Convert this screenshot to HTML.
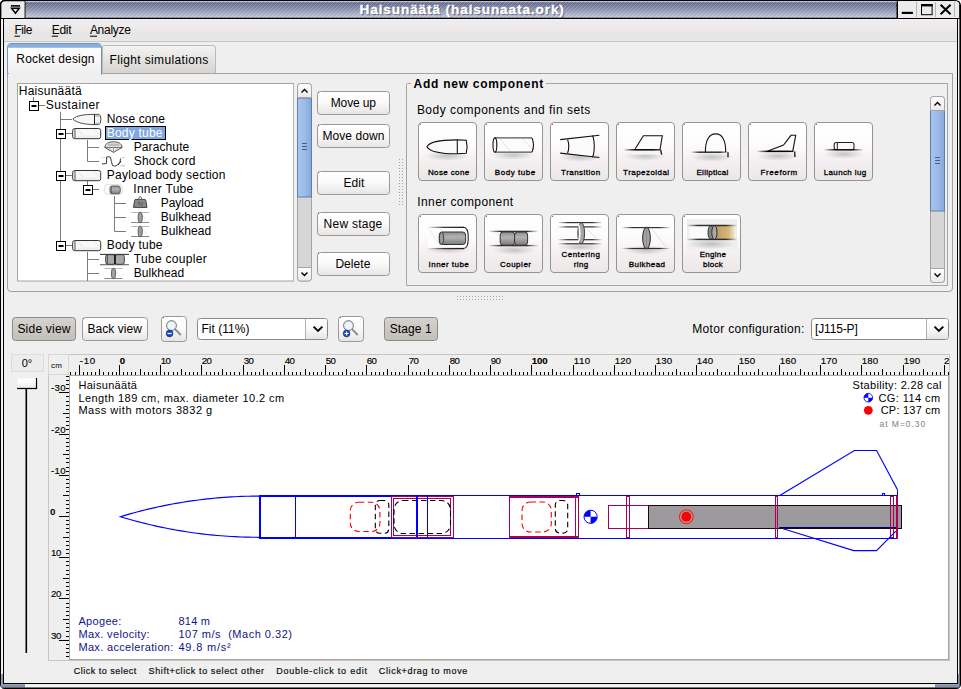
<!DOCTYPE html><html><head><meta charset="utf-8"><style>html,body{margin:0;padding:0;background:#efefef;overflow:hidden;width:961px;height:689px}svg{display:block}text{font-family:"Liberation Sans",sans-serif;white-space:pre}</style></head><body>
<svg width="961" height="689" viewBox="0 0 961 689" shape-rendering="auto">
<defs>
<linearGradient id="gTitle" x1="0" y1="0" x2="0" y2="1"><stop offset="0" stop-color="#5a6187"/><stop offset="0.5" stop-color="#8b91ad"/><stop offset="1" stop-color="#c3c6da"/></linearGradient>
<pattern id="pStripe" width="4" height="4" patternUnits="userSpaceOnUse"><path d="M-1,5 L5,-1" stroke="#ffffff" stroke-opacity="0.22" stroke-width="1"/><path d="M-1,1 L1,-1 M3,5 L5,3" stroke="#ffffff" stroke-opacity="0.22" stroke-width="1"/></pattern>
<linearGradient id="gMenu" x1="0" y1="0" x2="0" y2="1"><stop offset="0" stop-color="#f6f3f6"/><stop offset="0.06" stop-color="#efecef"/><stop offset="0.33" stop-color="#eeebee"/><stop offset="0.36" stop-color="#edeae6"/><stop offset="0.6" stop-color="#ebe6e6"/><stop offset="0.62" stop-color="#e6e6e6"/><stop offset="0.9" stop-color="#e6e6e6"/><stop offset="1" stop-color="#ebe8eb"/></linearGradient>
<linearGradient id="gBtn" x1="0" y1="0" x2="0" y2="1"><stop offset="0" stop-color="#ffffff"/><stop offset="0.45" stop-color="#fbfafa"/><stop offset="1" stop-color="#e8e4e4"/></linearGradient>
<linearGradient id="gBtnP" x1="0" y1="0" x2="0" y2="1"><stop offset="0" stop-color="#d6d2ce"/><stop offset="1" stop-color="#c2beba"/></linearGradient>
<linearGradient id="gComp" x1="0" y1="0" x2="0" y2="1"><stop offset="0" stop-color="#ffffff"/><stop offset="0.35" stop-color="#fdfcfd"/><stop offset="0.6" stop-color="#f6f2f4"/><stop offset="1" stop-color="#ebe7e6"/></linearGradient>
<linearGradient id="gTab" x1="0" y1="0" x2="0" y2="1"><stop offset="0" stop-color="#f4f4f4"/><stop offset="1" stop-color="#d6d3d0"/></linearGradient>
<linearGradient id="gTabSel" x1="0" y1="0" x2="0" y2="1"><stop offset="0" stop-color="#ffffff"/><stop offset="1" stop-color="#efefef"/></linearGradient>
<linearGradient id="gThumb" x1="0" y1="0" x2="1" y2="0"><stop offset="0" stop-color="#a9c5ec"/><stop offset="0.5" stop-color="#9dbbe6"/><stop offset="1" stop-color="#86a7da"/></linearGradient>
<linearGradient id="gArrowBtn" x1="0" y1="0" x2="0" y2="1"><stop offset="0" stop-color="#ffffff"/><stop offset="1" stop-color="#ebe8e8"/></linearGradient>
<linearGradient id="gShadow" x1="0" y1="0" x2="0" y2="1"><stop offset="0" stop-color="#000" stop-opacity="0.22"/><stop offset="1" stop-color="#000" stop-opacity="0"/></linearGradient>
<radialGradient id="gShadowR" cx="0.5" cy="0.5" r="0.5"><stop offset="0" stop-color="#000" stop-opacity="0.2"/><stop offset="1" stop-color="#000" stop-opacity="0"/></radialGradient>
<linearGradient id="gCyl" x1="0" y1="0" x2="0" y2="1"><stop offset="0" stop-color="#8c8c8c"/><stop offset="0.4" stop-color="#b4b4b4"/><stop offset="1" stop-color="#7a7a7a"/></linearGradient>
<linearGradient id="gTan" x1="0" y1="0" x2="1" y2="0"><stop offset="0" stop-color="#b89860"/><stop offset="0.7" stop-color="#d8b878"/><stop offset="1" stop-color="#f0e8d8"/></linearGradient>
<linearGradient id="gFade" x1="0" y1="0" x2="1" y2="0"><stop offset="0" stop-color="#000" stop-opacity="0.05"/><stop offset="0.22" stop-color="#000" stop-opacity="0.8"/><stop offset="0.78" stop-color="#000" stop-opacity="0.8"/><stop offset="1" stop-color="#000" stop-opacity="0.05"/></linearGradient>
<linearGradient id="gFadeL" x1="0" y1="0" x2="1" y2="0"><stop offset="0" stop-color="#000" stop-opacity="0"/><stop offset="0.45" stop-color="#000" stop-opacity="0.75"/><stop offset="1" stop-color="#000" stop-opacity="0.9"/></linearGradient>
</defs>
<rect x="0" y="0" width="961" height="689" fill="#efefef" stroke="none" stroke-width="1" rx="0" />
<rect x="0" y="0" width="961" height="19" fill="#000" stroke="none" stroke-width="1" rx="0" />
<rect x="25.5" y="1.2" width="871" height="16.5" fill="url(#gTitle)" stroke="none" stroke-width="1" rx="0" />
<rect x="25.5" y="1.2" width="871" height="16.5" fill="url(#pStripe)" stroke="none" stroke-width="1" rx="0" />
<line x1="25.5" y1="1.7" x2="897" y2="1.7" stroke="#d8dae8" stroke-width="1" />
<path d="M0,0 L5,0 Q0,0 0,5 Z" fill="#ffffff"/>
<path d="M0,19 L0,5 Q0,0 5,0 L25,0 L25,19 Z" fill="#000"/>
<path d="M1.2,18 L1.2,5.5 Q1.2,1.2 5.5,1.2 L24.6,1.2 L24.6,18 Z" fill="#ececec"/>
<rect x="10.9" y="5.1" width="9.1" height="1.6" fill="#000" stroke="none" stroke-width="1" rx="0" />
<path d="M11.6,8.2 L19.3,8.2 L15.45,13.2 Z" fill="none" stroke="#000" stroke-width="1.5" stroke-linejoin="miter"/>
<g>
<text x="360.50" y="15.00" font-size="13.6" font-weight="bold" fill="#303040" letter-spacing="0.888" opacity="0.55" stroke="#303040" stroke-width="0.3">Haisunäätä (haisunaata.ork)</text>
<text x="359.50" y="14.00" font-size="13.6" font-weight="bold" fill="#ffffff" letter-spacing="0.888" stroke="#ffffff" stroke-width="0.3">Haisunäätä (haisunaata.ork)</text>
</g>
<path d="M897,0 L955,0 Q961,0 961,6 L961,19 L897,19 Z" fill="#000"/>
<path d="M898,1.1 L955,1.1 Q959.4,1.1 959.4,5.5 L959.4,18 L898,18 Z" fill="#ececec"/>
<path d="M955,0 L961,0 L961,6 Q961,0 955,0 Z" fill="#ffffff"/>
<line x1="916.5" y1="2" x2="916.5" y2="17" stroke="#b8b4b0" stroke-width="1" />
<line x1="935.5" y1="2" x2="935.5" y2="17" stroke="#b8b4b0" stroke-width="1" />
<line x1="954.5" y1="2" x2="954.5" y2="17" stroke="#b8b4b0" stroke-width="1" />
<rect x="901.8" y="11.8" width="11.1" height="2.2" fill="#000" stroke="none" stroke-width="1" rx="0" />
<rect x="921.5" y="4.5" width="10.6" height="10.2" fill="none" stroke="#000" stroke-width="1" rx="0" />
<rect x="921" y="4" width="11.6" height="2.4" fill="#000" stroke="none" stroke-width="1" rx="0" />
<path d="M940.6,4.8 L950.6,14.2 M950.6,4.8 L940.6,14.2" stroke="#000" stroke-width="2"/>
<line x1="0" y1="18.5" x2="958" y2="18.5" stroke="#000" stroke-width="1.1" />
<rect x="0" y="5" width="1.2" height="684" fill="#000" stroke="none" stroke-width="1" rx="0" />
<rect x="1.2" y="19" width="1.8" height="665" fill="#f4f4f4" stroke="none" stroke-width="1" rx="0" />
<rect x="3" y="18" width="1" height="666" fill="#000" stroke="none" stroke-width="1" rx="0" />
<rect x="957" y="18" width="1" height="666" fill="#000" stroke="none" stroke-width="1" rx="0" />
<rect x="958" y="19" width="1.4" height="665" fill="#f4f4f4" stroke="none" stroke-width="1" rx="0" />
<rect x="959.4" y="5" width="1.6" height="684" fill="#000" stroke="none" stroke-width="1" rx="0" />
<rect x="3" y="683" width="955" height="1.2" fill="#000" stroke="none" stroke-width="1" rx="0" />
<rect x="1" y="684.2" width="958" height="3.3" fill="#f4f4f4" stroke="none" stroke-width="1" rx="0" />
<rect x="1" y="684.2" width="24" height="3.3" fill="#8890a8" stroke="none" stroke-width="1" rx="0" />
<rect x="935" y="684.2" width="24" height="3.3" fill="#8890a8" stroke="none" stroke-width="1" rx="0" />
<rect x="1.2" y="674" width="1.8" height="10.2" fill="#8890a8" stroke="none" stroke-width="1" rx="0" />
<rect x="958" y="674" width="1.4" height="10.2" fill="#8890a8" stroke="none" stroke-width="1" rx="0" />
<rect x="0" y="687.5" width="961" height="1.5" fill="#000" stroke="none" stroke-width="1" rx="0" />
<path d="M0,684 L0,689 L5,689 Q0,689 0,684 Z" fill="#ffffff"/>
<path d="M961,684 L961,689 L956,689 Q961,689 961,684 Z" fill="#ffffff"/>
<rect x="4" y="19" width="953" height="22" fill="url(#gMenu)" stroke="none" stroke-width="1" rx="0" />
<line x1="4" y1="41.5" x2="957" y2="41.5" stroke="#c9c5bd" stroke-width="1" />
<rect x="4" y="42" width="953" height="641" fill="#efefef" stroke="none" stroke-width="1" rx="0" />
<text x="14.50" y="33.50" font-size="12" font-weight="normal" fill="#000" letter-spacing="-0.507" >File</text>
<line x1="14.5" y1="36.2" x2="20" y2="36.2" stroke="#000" stroke-width="1" />
<text x="51.80" y="33.50" font-size="12" font-weight="normal" fill="#000" letter-spacing="-0.320" >Edit</text>
<line x1="51.8" y1="36.2" x2="58" y2="36.2" stroke="#000" stroke-width="1" />
<text x="89.90" y="33.50" font-size="12" font-weight="normal" fill="#000" letter-spacing="-0.287" >Analyze</text>
<line x1="89.9" y1="36.2" x2="97" y2="36.2" stroke="#000" stroke-width="1" />
<path d="M7.5,73.5 L952.5,73.5 L952.5,288 Q952.5,291.5 949,291.5 L11,291.5 Q7.5,291.5 7.5,288 Z" fill="#efefef" stroke="#a4a09c" stroke-width="1"/>
<path d="M102.5,73.5 L102.5,48 Q102.5,45.5 105,45.5 L213,45.5 Q215.5,45.5 215.5,48 L215.5,73.5 Z" fill="url(#gTab)" stroke="#bdb9b5" stroke-width="1"/>
<line x1="102" y1="73.5" x2="216" y2="73.5" stroke="#a8a4a0" stroke-width="1" />
<text x="109.50" y="64.30" font-size="12" font-weight="normal" fill="#000" letter-spacing="0.362" >Flight simulations</text>
<path d="M7.5,74.5 L7.5,47 Q7.5,43.5 11,43.5 L98,43.5 Q101.5,43.5 101.5,47 L101.5,74.5 Z" fill="url(#gTabSel)" stroke="#7592bb" stroke-width="1"/>
<path d="M8,47.5 L8,46.8 Q8,44 11,44 L98,44 Q101,44 101,46.8 L101,47.5 Z" fill="#8aaddf"/>
<line x1="8" y1="47.5" x2="101" y2="47.5" stroke="#a6c0e6" stroke-width="1" />
<rect x="8" y="72" width="93" height="3" fill="#efefef"/>
<text x="16.30" y="62.50" font-size="12" font-weight="normal" fill="#000" letter-spacing="0.177" >Rocket design</text>
<line x1="7.5" y1="73.5" x2="9" y2="73.5" stroke="#b0aca8" stroke-width="1" />
<rect x="17.5" y="83.5" width="276" height="197.5" fill="#ffffff" stroke="#a8a4a0" stroke-width="1" rx="0" />
<line x1="293.5" y1="84" x2="293.5" y2="281" stroke="#b8b4b0" stroke-width="1" />
<line x1="33.5" y1="97" x2="33.5" y2="101" stroke="#7a7a7a" stroke-width="1" />
<line x1="60.5" y1="112" x2="60.5" y2="242" stroke="#7a7a7a" stroke-width="1" />
<line x1="87.5" y1="140" x2="87.5" y2="161.5" stroke="#7a7a7a" stroke-width="1" />
<line x1="87.5" y1="181" x2="87.5" y2="185" stroke="#7a7a7a" stroke-width="1" />
<line x1="114.5" y1="196" x2="114.5" y2="231.5" stroke="#7a7a7a" stroke-width="1" />
<line x1="87.5" y1="252" x2="87.5" y2="281" stroke="#7a7a7a" stroke-width="1" />
<text x="18.75" y="95.30" font-size="12" font-weight="normal" fill="#000" letter-spacing="0.253" >Haisunäätä</text>
<rect x="29.5" y="101.5" width="9" height="9" fill="#ffffff" stroke="#000" stroke-width="1" rx="0" />
<rect x="31.5" y="105" width="5" height="2" fill="#000" stroke="none" stroke-width="1" rx="0" />
<line x1="39" y1="105.5" x2="45" y2="105.5" stroke="#7a7a7a" stroke-width="1" />
<text x="45.75" y="109.30" font-size="12" font-weight="normal" fill="#000" letter-spacing="0.389" >Sustainer</text>
<line x1="60.5" y1="119.5" x2="72" y2="119.5" stroke="#7a7a7a" stroke-width="1" />
<path d="M72.9,119.1 C75.9,115.5 84.9,114.3 94.0,114.4 L98.9,114.4 Q100.9,114.4 100.9,119 Q100.9,124.6 98.9,124.6 L94.0,124.6 C84.9,124.6 75.9,122.5 72.9,119.1 Z" fill="#f6f6f6" stroke="#3a3a3a" stroke-width="0.9"/>
<line x1="94.5" y1="114.4" x2="94.5" y2="124.6" stroke="#222" stroke-width="1" />
<rect x="95.4" y="115" width="4.5" height="2" fill="#c8c8c8" stroke="none" stroke-width="1" rx="0" />
<rect x="95.4" y="122.5" width="4.5" height="1.6" fill="#c0c0c0" stroke="none" stroke-width="1" rx="0" />
<text x="106.75" y="123.30" font-size="12" font-weight="normal" fill="#000" letter-spacing="0.111" >Nose cone</text>
<rect x="56.5" y="129.5" width="9" height="9" fill="#ffffff" stroke="#000" stroke-width="1" rx="0" />
<rect x="58.5" y="133" width="5" height="2" fill="#000" stroke="none" stroke-width="1" rx="0" />
<line x1="66" y1="133.5" x2="72" y2="133.5" stroke="#7a7a7a" stroke-width="1" />
<rect x="72.7" y="128.5" width="28" height="10.2" fill="#f8f8f8" stroke="#333" stroke-width="1" rx="2" />
<line x1="75.0" y1="129" x2="75.0" y2="138.2" stroke="#444" stroke-width="0.9" />
<line x1="78.2" y1="129.5" x2="84.2" y2="137" stroke="#dcdcdc" stroke-width="0.8" />
<line x1="94.2" y1="129.5" x2="99.2" y2="134.5" stroke="#dcdcdc" stroke-width="0.8" />
<rect x="76.2" y="135.5" width="23" height="2.5" fill="#eeeeee" stroke="none" stroke-width="1" rx="0" />
<rect x="105.5" y="126.5" width="60" height="13" fill="#7ea6e0" stroke="#000" stroke-width="1" rx="0" />
<text x="106.75" y="137.30" font-size="12" font-weight="normal" fill="#ffffff" letter-spacing="0.219" >Body tube</text>
<line x1="87.5" y1="147.5" x2="99" y2="147.5" stroke="#7a7a7a" stroke-width="1" />
<path d="M104.8,147.4 Q105.5,141.8 113.5,141.8 Q121.5,141.8 122.2,147.4 L113.5,152.4 Z" fill="#f0f0f0" stroke="#444" stroke-width="0.9"/>
<rect x="107.5" y="143.5" width="12" height="2.5" fill="#bdbdbd" stroke="none" stroke-width="1" rx="0" />
<line x1="104.8" y1="147.4" x2="122.2" y2="147.4" stroke="#555" stroke-width="0.9" />
<line x1="113.5" y1="147.4" x2="113.5" y2="152" stroke="#888" stroke-width="0.7" />
<line x1="108.5" y1="147.4" x2="112.5" y2="152" stroke="#999" stroke-width="0.6" />
<line x1="118.5" y1="147.4" x2="114.5" y2="152" stroke="#999" stroke-width="0.6" />
<text x="133.75" y="151.30" font-size="12" font-weight="normal" fill="#000" letter-spacing="0.098" >Parachute</text>
<line x1="87.5" y1="161.5" x2="99" y2="161.5" stroke="#7a7a7a" stroke-width="1" />
<path d="M102.0,164 L106.5,163.5 L106.7,157 Q108.0,156.4 110.4,157.2 Q111.5,162 112.5,165.5 Q114.5,167 117.5,165 L120.0,162.5 L120.5,158.5" fill="none" stroke="#3a3a3a" stroke-width="1"/>
<line x1="118.0" y1="165" x2="121.0" y2="161" stroke="#222" stroke-width="1" />
<line x1="120.5" y1="158" x2="125.0" y2="157.4" stroke="#c8c8c8" stroke-width="0.9" />
<line x1="120.5" y1="166" x2="125.0" y2="165.6" stroke="#aaaaaa" stroke-width="0.9" />
<line x1="101.0" y1="157.6" x2="106.0" y2="157.4" stroke="#dddddd" stroke-width="0.9" />
<text x="133.75" y="165.30" font-size="12" font-weight="normal" fill="#000" letter-spacing="0.194" >Shock cord</text>
<rect x="56.5" y="171.5" width="9" height="9" fill="#ffffff" stroke="#000" stroke-width="1" rx="0" />
<rect x="58.5" y="175" width="5" height="2" fill="#000" stroke="none" stroke-width="1" rx="0" />
<line x1="66" y1="175.5" x2="72" y2="175.5" stroke="#7a7a7a" stroke-width="1" />
<rect x="72.7" y="170.5" width="28" height="10.2" fill="#f8f8f8" stroke="#333" stroke-width="1" rx="2" />
<line x1="75.0" y1="171" x2="75.0" y2="180.2" stroke="#444" stroke-width="0.9" />
<line x1="78.2" y1="171.5" x2="84.2" y2="179" stroke="#dcdcdc" stroke-width="0.8" />
<line x1="94.2" y1="171.5" x2="99.2" y2="176.5" stroke="#dcdcdc" stroke-width="0.8" />
<rect x="76.2" y="177.5" width="23" height="2.5" fill="#eeeeee" stroke="none" stroke-width="1" rx="0" />
<text x="106.75" y="179.30" font-size="12" font-weight="normal" fill="#000" letter-spacing="0.244" >Payload body section</text>
<rect x="83.5" y="185.5" width="9" height="9" fill="#ffffff" stroke="#000" stroke-width="1" rx="0" />
<rect x="85.5" y="189" width="5" height="2" fill="#000" stroke="none" stroke-width="1" rx="0" />
<line x1="93" y1="189.5" x2="99" y2="189.5" stroke="#7a7a7a" stroke-width="1" />
<ellipse cx="113.5" cy="189.5" rx="11" ry="6" fill="url(#gShadowR)"/>
<rect x="104.5" y="184.5" width="18" height="10" fill="#fafafa" stroke="#dcdcdc" stroke-width="0.8" rx="3" />
<rect x="110.0" y="186" width="10.2" height="7.8" fill="url(#gCyl)" stroke="#555" stroke-width="0.9" rx="2" />
<line x1="111.5" y1="186.5" x2="111.5" y2="193.5" stroke="#555" stroke-width="0.7" />
<text x="133.25" y="193.30" font-size="12" font-weight="normal" fill="#000" letter-spacing="0.293" >Inner Tube</text>
<line x1="114.5" y1="203.5" x2="126" y2="203.5" stroke="#7a7a7a" stroke-width="1" />
<path d="M134.7,200.4 Q134.7,199.4 135.7,199.4 L144.79999999999998,199.4 Q145.7,199.4 145.79999999999998,200.4 L147.0,207.4 L133.39999999999998,207.4 Z" fill="#8a8a8a" stroke="#333" stroke-width="0.9"/>
<circle cx="140.2" cy="198.2" r="1.4" fill="#fff" stroke="#444" stroke-width="0.8"/>
<text x="137.7" y="205.2" font-size="5" fill="#555">kg</text>
<text x="160.75" y="207.30" font-size="12" font-weight="normal" fill="#000" letter-spacing="-0.053" >Payload</text>
<line x1="114.5" y1="217.5" x2="126" y2="217.5" stroke="#7a7a7a" stroke-width="1" />
<line x1="131.2" y1="212.5" x2="149.2" y2="212.5" stroke="#b8b8b8" stroke-width="1" />
<line x1="131.2" y1="222.5" x2="149.2" y2="222.5" stroke="#888888" stroke-width="1" />
<line x1="141.2" y1="213.5" x2="147.2" y2="221" stroke="#e0e0e0" stroke-width="0.7" />
<ellipse cx="140.2" cy="217.5" rx="2.1" ry="5.2" fill="#a0a0a0" stroke="#444" stroke-width="0.8"/>
<text x="160.75" y="221.30" font-size="12" font-weight="normal" fill="#000" letter-spacing="0.066" >Bulkhead</text>
<line x1="114.5" y1="231.5" x2="126" y2="231.5" stroke="#7a7a7a" stroke-width="1" />
<line x1="131.2" y1="226.5" x2="149.2" y2="226.5" stroke="#b8b8b8" stroke-width="1" />
<line x1="131.2" y1="236.5" x2="149.2" y2="236.5" stroke="#888888" stroke-width="1" />
<line x1="141.2" y1="227.5" x2="147.2" y2="235" stroke="#e0e0e0" stroke-width="0.7" />
<ellipse cx="140.2" cy="231.5" rx="2.1" ry="5.2" fill="#a0a0a0" stroke="#444" stroke-width="0.8"/>
<text x="160.75" y="235.30" font-size="12" font-weight="normal" fill="#000" letter-spacing="0.066" >Bulkhead</text>
<rect x="56.5" y="241.5" width="9" height="9" fill="#ffffff" stroke="#000" stroke-width="1" rx="0" />
<rect x="58.5" y="245" width="5" height="2" fill="#000" stroke="none" stroke-width="1" rx="0" />
<line x1="66" y1="245.5" x2="72" y2="245.5" stroke="#7a7a7a" stroke-width="1" />
<rect x="72.7" y="240.5" width="28" height="10.2" fill="#f8f8f8" stroke="#333" stroke-width="1" rx="2" />
<line x1="75.0" y1="241" x2="75.0" y2="250.2" stroke="#444" stroke-width="0.9" />
<line x1="78.2" y1="241.5" x2="84.2" y2="249" stroke="#dcdcdc" stroke-width="0.8" />
<line x1="94.2" y1="241.5" x2="99.2" y2="246.5" stroke="#dcdcdc" stroke-width="0.8" />
<rect x="76.2" y="247.5" width="23" height="2.5" fill="#eeeeee" stroke="none" stroke-width="1" rx="0" />
<text x="106.75" y="249.30" font-size="12" font-weight="normal" fill="#000" letter-spacing="0.219" >Body tube</text>
<line x1="87.5" y1="259.5" x2="99" y2="259.5" stroke="#7a7a7a" stroke-width="1" />
<line x1="100.0" y1="254.4" x2="129.0" y2="254.4" stroke="#3a3a3a" stroke-width="1.1" />
<line x1="100.0" y1="264.7" x2="129.0" y2="264.7" stroke="#666" stroke-width="1.1" />
<rect x="105.7" y="254.7" width="9.3" height="9.6" fill="#a8a8a8" stroke="#333" stroke-width="0.9" rx="2" />
<rect x="115.0" y="254.7" width="9.3" height="9.6" fill="#a8a8a8" stroke="#333" stroke-width="0.9" rx="2" />
<line x1="107.5" y1="255" x2="107.5" y2="264" stroke="#333" stroke-width="0.7" />
<line x1="115.0" y1="255" x2="115.0" y2="264" stroke="#000" stroke-width="1.3" />
<text x="133.75" y="263.30" font-size="12" font-weight="normal" fill="#000" letter-spacing="0.309" >Tube coupler</text>
<line x1="87.5" y1="273.5" x2="99" y2="273.5" stroke="#7a7a7a" stroke-width="1" />
<line x1="104.5" y1="268.5" x2="122.5" y2="268.5" stroke="#b8b8b8" stroke-width="1" />
<line x1="104.5" y1="278.5" x2="122.5" y2="278.5" stroke="#888888" stroke-width="1" />
<line x1="114.5" y1="269.5" x2="120.5" y2="277" stroke="#e0e0e0" stroke-width="0.7" />
<ellipse cx="113.5" cy="273.5" rx="2.1" ry="5.2" fill="#a0a0a0" stroke="#444" stroke-width="0.8"/>
<text x="133.75" y="277.30" font-size="12" font-weight="normal" fill="#000" letter-spacing="0.066" >Bulkhead</text>
<rect x="297.5" y="83.5" width="14" height="197.5" fill="#d6d6d6" stroke="#a8a4a0" stroke-width="1" rx="3" />
<rect x="297.5" y="98" width="14" height="99" fill="url(#gThumb)" stroke="#5d7fb0" stroke-width="1" rx="0" />
<path d="M302,143.5 h5 M302,146.5 h5 M302,149.5 h5" stroke="#46608e" stroke-width="1"/>
<path d="M297.5,97.5 L297.5,86.5 Q297.5,83.5 300.5,83.5 L308.5,83.5 Q311.5,83.5 311.5,86.5 L311.5,97.5 Z" fill="url(#gArrowBtn)" stroke="#a8a4a0"/>
<path d="M301.5,92.5 L304.5,89.5 L307.5,92.5" fill="none" stroke="#000" stroke-width="1.4"/>
<path d="M297.5,267.5 L297.5,278 Q297.5,281 300.5,281 L308.5,281 Q311.5,281 311.5,278 L311.5,267.5 Z" fill="url(#gArrowBtn)" stroke="#a8a4a0"/>
<path d="M301.5,272.5 L304.5,275.5 L307.5,272.5" fill="none" stroke="#000" stroke-width="1.4"/>
<rect x="317.5" y="91.5" width="72" height="23" fill="url(#gBtn)" stroke="#9e9894" stroke-width="1" rx="3" />
<rect x="318" y="92" width="1" height="1" fill="#ff00ff" stroke="none" stroke-width="1" rx="0" />
<text x="330.70" y="107.00" font-size="12" font-weight="normal" fill="#000" letter-spacing="-0.113" >Move up</text>
<rect x="317.5" y="124.5" width="72" height="23" fill="url(#gBtn)" stroke="#9e9894" stroke-width="1" rx="3" />
<rect x="318" y="125" width="1" height="1" fill="#ff00ff" stroke="none" stroke-width="1" rx="0" />
<text x="322.40" y="139.80" font-size="12" font-weight="normal" fill="#000" letter-spacing="0.085" >Move down</text>
<rect x="317.5" y="171.5" width="72" height="23" fill="url(#gBtn)" stroke="#9e9894" stroke-width="1" rx="3" />
<rect x="318" y="172" width="1" height="1" fill="#ff00ff" stroke="none" stroke-width="1" rx="0" />
<text x="343.50" y="187.00" font-size="12" font-weight="normal" fill="#000" letter-spacing="0.013" >Edit</text>
<rect x="317.5" y="212.5" width="72" height="23" fill="url(#gBtn)" stroke="#9e9894" stroke-width="1" rx="3" />
<rect x="318" y="213" width="1" height="1" fill="#ff00ff" stroke="none" stroke-width="1" rx="0" />
<text x="323.60" y="228.20" font-size="12" font-weight="normal" fill="#000" letter-spacing="0.245" >New stage</text>
<rect x="317.5" y="252.5" width="72" height="23" fill="url(#gBtn)" stroke="#9e9894" stroke-width="1" rx="3" />
<rect x="318" y="253" width="1" height="1" fill="#ff00ff" stroke="none" stroke-width="1" rx="0" />
<text x="335.40" y="267.90" font-size="12" font-weight="normal" fill="#000" letter-spacing="0.064" >Delete</text>
<rect x="399" y="159" width="1" height="1" fill="#a8a4a0" stroke="none" stroke-width="1" rx="0" />
<rect x="402" y="159" width="1" height="1" fill="#a8a4a0" stroke="none" stroke-width="1" rx="0" />
<rect x="399" y="162" width="1" height="1" fill="#a8a4a0" stroke="none" stroke-width="1" rx="0" />
<rect x="402" y="162" width="1" height="1" fill="#a8a4a0" stroke="none" stroke-width="1" rx="0" />
<rect x="399" y="165" width="1" height="1" fill="#a8a4a0" stroke="none" stroke-width="1" rx="0" />
<rect x="402" y="165" width="1" height="1" fill="#a8a4a0" stroke="none" stroke-width="1" rx="0" />
<rect x="399" y="168" width="1" height="1" fill="#a8a4a0" stroke="none" stroke-width="1" rx="0" />
<rect x="402" y="168" width="1" height="1" fill="#a8a4a0" stroke="none" stroke-width="1" rx="0" />
<rect x="399" y="171" width="1" height="1" fill="#a8a4a0" stroke="none" stroke-width="1" rx="0" />
<rect x="402" y="171" width="1" height="1" fill="#a8a4a0" stroke="none" stroke-width="1" rx="0" />
<rect x="399" y="174" width="1" height="1" fill="#a8a4a0" stroke="none" stroke-width="1" rx="0" />
<rect x="402" y="174" width="1" height="1" fill="#a8a4a0" stroke="none" stroke-width="1" rx="0" />
<rect x="399" y="177" width="1" height="1" fill="#a8a4a0" stroke="none" stroke-width="1" rx="0" />
<rect x="402" y="177" width="1" height="1" fill="#a8a4a0" stroke="none" stroke-width="1" rx="0" />
<rect x="399" y="180" width="1" height="1" fill="#a8a4a0" stroke="none" stroke-width="1" rx="0" />
<rect x="402" y="180" width="1" height="1" fill="#a8a4a0" stroke="none" stroke-width="1" rx="0" />
<rect x="399" y="183" width="1" height="1" fill="#a8a4a0" stroke="none" stroke-width="1" rx="0" />
<rect x="402" y="183" width="1" height="1" fill="#a8a4a0" stroke="none" stroke-width="1" rx="0" />
<rect x="399" y="186" width="1" height="1" fill="#a8a4a0" stroke="none" stroke-width="1" rx="0" />
<rect x="402" y="186" width="1" height="1" fill="#a8a4a0" stroke="none" stroke-width="1" rx="0" />
<rect x="399" y="189" width="1" height="1" fill="#a8a4a0" stroke="none" stroke-width="1" rx="0" />
<rect x="402" y="189" width="1" height="1" fill="#a8a4a0" stroke="none" stroke-width="1" rx="0" />
<rect x="399" y="192" width="1" height="1" fill="#a8a4a0" stroke="none" stroke-width="1" rx="0" />
<rect x="402" y="192" width="1" height="1" fill="#a8a4a0" stroke="none" stroke-width="1" rx="0" />
<rect x="399" y="195" width="1" height="1" fill="#a8a4a0" stroke="none" stroke-width="1" rx="0" />
<rect x="402" y="195" width="1" height="1" fill="#a8a4a0" stroke="none" stroke-width="1" rx="0" />
<rect x="399" y="198" width="1" height="1" fill="#a8a4a0" stroke="none" stroke-width="1" rx="0" />
<rect x="402" y="198" width="1" height="1" fill="#a8a4a0" stroke="none" stroke-width="1" rx="0" />
<rect x="399" y="201" width="1" height="1" fill="#a8a4a0" stroke="none" stroke-width="1" rx="0" />
<rect x="402" y="201" width="1" height="1" fill="#a8a4a0" stroke="none" stroke-width="1" rx="0" />
<rect x="399" y="204" width="1" height="1" fill="#a8a4a0" stroke="none" stroke-width="1" rx="0" />
<rect x="402" y="204" width="1" height="1" fill="#a8a4a0" stroke="none" stroke-width="1" rx="0" />
<path d="M411,83.5 L407.5,83.5 Q406.5,83.5 406.5,84.5 L406.5,285.5 L947.5,285.5 L947.5,83.5 L546,83.5" fill="none" stroke="#a8a4a0" stroke-width="1"/>
<text x="413.60" y="88.00" font-size="12" font-weight="bold" fill="#000" letter-spacing="0.728" >Add new component</text>
<text x="416.90" y="114.00" font-size="12" font-weight="normal" fill="#000" letter-spacing="0.470" >Body components and fin sets</text>
<text x="417.20" y="206.20" font-size="12" font-weight="normal" fill="#000" letter-spacing="0.420" >Inner component</text>
<rect x="418.5" y="122.5" width="58" height="58" fill="url(#gComp)" stroke="#9a9490" stroke-width="1" rx="3.5" />
<rect x="420" y="124" width="1" height="1" fill="#ff00ff" stroke="none" stroke-width="1" rx="0" />
<text x="427.90" y="175.20" font-size="8" font-weight="normal" fill="#000" letter-spacing="0.383" stroke="#000" stroke-width="0.3">Nose cone</text>
<rect x="484.5" y="122.5" width="58" height="58" fill="url(#gComp)" stroke="#9a9490" stroke-width="1" rx="3.5" />
<rect x="486" y="124" width="1" height="1" fill="#ff00ff" stroke="none" stroke-width="1" rx="0" />
<text x="494.80" y="175.20" font-size="8" font-weight="normal" fill="#000" letter-spacing="0.538" stroke="#000" stroke-width="0.3">Body tube</text>
<rect x="550.5" y="122.5" width="58" height="58" fill="url(#gComp)" stroke="#9a9490" stroke-width="1" rx="3.5" />
<rect x="552" y="124" width="1" height="1" fill="#ff00ff" stroke="none" stroke-width="1" rx="0" />
<text x="561.10" y="175.20" font-size="8" font-weight="normal" fill="#000" letter-spacing="0.467" stroke="#000" stroke-width="0.3">Transition</text>
<rect x="616.5" y="122.5" width="58" height="58" fill="url(#gComp)" stroke="#9a9490" stroke-width="1" rx="3.5" />
<rect x="618" y="124" width="1" height="1" fill="#ff00ff" stroke="none" stroke-width="1" rx="0" />
<text x="623.10" y="175.20" font-size="8" font-weight="normal" fill="#000" letter-spacing="0.448" stroke="#000" stroke-width="0.3">Trapezoidal</text>
<rect x="682.5" y="122.5" width="58" height="58" fill="url(#gComp)" stroke="#9a9490" stroke-width="1" rx="3.5" />
<rect x="684" y="124" width="1" height="1" fill="#ff00ff" stroke="none" stroke-width="1" rx="0" />
<text x="696.50" y="175.20" font-size="8" font-weight="normal" fill="#000" letter-spacing="0.271" stroke="#000" stroke-width="0.3">Elliptical</text>
<rect x="748.5" y="122.5" width="58" height="58" fill="url(#gComp)" stroke="#9a9490" stroke-width="1" rx="3.5" />
<rect x="750" y="124" width="1" height="1" fill="#ff00ff" stroke="none" stroke-width="1" rx="0" />
<text x="760.60" y="175.20" font-size="8" font-weight="normal" fill="#000" letter-spacing="0.589" stroke="#000" stroke-width="0.3">Freeform</text>
<rect x="814.5" y="122.5" width="58" height="58" fill="url(#gComp)" stroke="#9a9490" stroke-width="1" rx="3.5" />
<rect x="816" y="124" width="1" height="1" fill="#ff00ff" stroke="none" stroke-width="1" rx="0" />
<text x="823.70" y="175.20" font-size="8" font-weight="normal" fill="#000" letter-spacing="0.376" stroke="#000" stroke-width="0.3">Launch lug</text>
<ellipse cx="447" cy="156" rx="22" ry="5" fill="url(#gShadowR)" opacity="1.40"/>
<path d="M427,146.7 C429.5,141.8 440,139.8 457.3,139.9 L466.2,140.3 Q468,146.7 466.2,153.2 L457.3,153.8 C440,153.8 429.5,151.6 427,146.7 Z" fill="#fafafa" stroke="#111" stroke-width="1.1"/>
<line x1="457.3" y1="140" x2="457.3" y2="153.8" stroke="#111" stroke-width="1.1" />
<ellipse cx="513" cy="155" rx="22" ry="5" fill="url(#gShadowR)" opacity="1.40"/>
<rect x="494.5" y="137.8" width="38" height="14.4" fill="#fcfcfc" stroke="none" stroke-width="1" rx="0" />
<line x1="500" y1="138.8" x2="510" y2="151" stroke="#dadada" stroke-width="0.8" />
<line x1="523" y1="138.8" x2="532" y2="149" stroke="#dadada" stroke-width="0.8" />
<path d="M494.5,137.9 L532,137.9 M494.5,152.1 L532,152.1" stroke="#555" stroke-width="1.4"/>
<path d="M532,137.9 Q535,145 532,152.1" fill="none" stroke="#111" stroke-width="1.1"/>
<ellipse cx="494.9" cy="145" rx="1.9" ry="7.1" fill="#fafafa" stroke="#111" stroke-width="1.1"/>
<ellipse cx="580" cy="157" rx="22" ry="5" fill="url(#gShadowR)" opacity="1.40"/>
<path d="M567.6,139.6 L592.7,135.4 Q596,146.4 592.7,157.4 L567.6,153 Q570,146.3 567.6,139.6 Z" fill="#fbfbfb" stroke="none"/>
<path d="M560.2,139.6 L599.4,135.3 M560.2,153.1 L599.4,157.5" stroke="#111" stroke-width="1.1" fill="none"/>
<path d="M567.6,139.6 Q570,146.3 567.6,153 M592.7,135.4 Q596,146.4 592.7,157.4" stroke="#111" stroke-width="1.1" fill="none"/>
<ellipse cx="645" cy="156" rx="21" ry="5" fill="url(#gShadowR)" opacity="1.40"/>
<path d="M626.5,149.8 L660.3,149.8 L661.7,154.5 L632,154.5 Z" fill="#f4f4f4" stroke="none"/>
<path d="M634.6,149.8 L643.4,135.8 L662.3,135.8 L660,149.8 Z" fill="#fcfcfc" stroke="#111" stroke-width="1.1"/>
<rect x="624" y="149.05" width="37.50" height="1.5" fill="url(#gFade)"/>
<path d="M660.6,149.8 L661.7,154.6" stroke="#222" stroke-width="1.4" fill="none"/>
<ellipse cx="712" cy="157" rx="21" ry="5" fill="url(#gShadowR)" opacity="1.40"/>
<path d="M705.4,152.2 C705.2,140.5 709,133.9 715.7,133.9 C722.3,133.9 725.9,140.5 725.7,152.2" fill="#fcfcfc" stroke="#111" stroke-width="1.1"/>
<rect x="691" y="151.45" width="37.50" height="1.5" fill="url(#gFade)"/>
<path d="M728,152.2 L728,157.2" stroke="#222" stroke-width="1.4" fill="none"/>
<ellipse cx="778" cy="156" rx="21" ry="5" fill="url(#gShadowR)" opacity="1.40"/>
<path d="M766.6,151.4 L783.5,145 L791,135.3 L795.7,135.3 L792.7,151.4 Z" fill="#fcfcfc" stroke="#111" stroke-width="1.1"/>
<rect x="757" y="150.65" width="38.00" height="1.5" fill="url(#gFade)"/>
<path d="M794.7,151.4 L794.9,157" stroke="#222" stroke-width="1.4" fill="none"/>
<ellipse cx="844" cy="154" rx="20" ry="5" fill="url(#gShadowR)" opacity="1.40"/>
<rect x="834.2" y="142.5" width="19.8" height="7.2" fill="#fafafa" stroke="#222" stroke-width="1.1" rx="2" />
<line x1="837.3" y1="143" x2="837.3" y2="149.5" stroke="#222" stroke-width="1" />
<rect x="824" y="149.10" width="39.00" height="1.4" fill="url(#gFade)"/>
<rect x="418.5" y="214.5" width="58" height="58" fill="url(#gComp)" stroke="#9a9490" stroke-width="1" rx="3.5" />
<rect x="420" y="216" width="1" height="1" fill="#ff00ff" stroke="none" stroke-width="1" rx="0" />
<rect x="484.5" y="214.5" width="58" height="58" fill="url(#gComp)" stroke="#9a9490" stroke-width="1" rx="3.5" />
<rect x="486" y="216" width="1" height="1" fill="#ff00ff" stroke="none" stroke-width="1" rx="0" />
<rect x="550.5" y="214.5" width="58" height="58" fill="url(#gComp)" stroke="#9a9490" stroke-width="1" rx="3.5" />
<rect x="552" y="216" width="1" height="1" fill="#ff00ff" stroke="none" stroke-width="1" rx="0" />
<rect x="616.5" y="214.5" width="58" height="58" fill="url(#gComp)" stroke="#9a9490" stroke-width="1" rx="3.5" />
<rect x="618" y="216" width="1" height="1" fill="#ff00ff" stroke="none" stroke-width="1" rx="0" />
<rect x="682.5" y="214.5" width="58" height="58" fill="url(#gComp)" stroke="#9a9490" stroke-width="1" rx="3.5" />
<rect x="684" y="216" width="1" height="1" fill="#ff00ff" stroke="none" stroke-width="1" rx="0" />
<text x="428.60" y="267.00" font-size="8" font-weight="normal" fill="#000" letter-spacing="0.467" stroke="#000" stroke-width="0.3">Inner tube</text>
<text x="499.90" y="267.00" font-size="8" font-weight="normal" fill="#000" letter-spacing="0.517" stroke="#000" stroke-width="0.3">Coupler</text>
<text x="628.80" y="267.00" font-size="8" font-weight="normal" fill="#000" letter-spacing="0.406" stroke="#000" stroke-width="0.3">Bulkhead</text>
<text x="561.50" y="257.10" font-size="8" font-weight="normal" fill="#000" letter-spacing="0.473" stroke="#000" stroke-width="0.3">Centering</text>
<text x="573.70" y="267.30" font-size="8" font-weight="normal" fill="#000" letter-spacing="0.413" stroke="#000" stroke-width="0.3">ring</text>
<text x="699.70" y="256.80" font-size="8" font-weight="normal" fill="#000" letter-spacing="0.284" stroke="#000" stroke-width="0.3">Engine</text>
<text x="703.00" y="266.50" font-size="8" font-weight="normal" fill="#000" letter-spacing="0.295" stroke="#000" stroke-width="0.3">block</text>
<ellipse cx="448" cy="249" rx="22" ry="5" fill="url(#gShadowR)" opacity="1.40"/>
<path d="M428,227.3 L463.5,227.3 C467,227.3 468.3,232 468.3,237.9 C468.3,244 467,248.5 463.5,248.5 L428,248.5 Z" fill="#fdfdfd"/>
<rect x="427" y="226.7" width="37" height="1.3" fill="url(#gFadeL)"/>
<rect x="427" y="247.9" width="37" height="1.3" fill="url(#gFadeL)"/>
<path d="M463.5,227.3 C467,227.3 468.3,232 468.3,237.9 C468.3,244 467,248.5 463.5,248.5" fill="none" stroke="#222" stroke-width="1.1"/>
<line x1="430" y1="230" x2="440" y2="246" stroke="#e6e6e6" stroke-width="0.8" />
<rect x="439.3" y="232" width="26.3" height="12.5" fill="url(#gCyl)" stroke="#333" stroke-width="1" rx="3" />
<ellipse cx="441.5" cy="238.25" rx="2.2" ry="6.2" fill="#9a9a9a" stroke="#333" stroke-width="0.9"/>
<ellipse cx="514" cy="250" rx="22" ry="5" fill="url(#gShadowR)" opacity="1.40"/>
<rect x="489" y="230.70" width="49.00" height="1.4" fill="url(#gFade)"/>
<rect x="489" y="244.90" width="49.00" height="1.4" fill="url(#gFade)"/>
<rect x="500.2" y="232" width="14.6" height="13.2" fill="url(#gCyl)" stroke="#333" stroke-width="1" rx="3" />
<rect x="514.6" y="232" width="13" height="13.2" fill="url(#gCyl)" stroke="#333" stroke-width="1" rx="3" />
<ellipse cx="580" cy="247" rx="22" ry="4" fill="url(#gShadowR)" opacity="1.40"/>
<rect x="558" y="222.00" width="44.00" height="1.2" fill="url(#gFade)"/>
<rect x="558" y="226.30" width="44.00" height="1.2" fill="url(#gFade)"/>
<rect x="558" y="239.10" width="44.00" height="1.2" fill="url(#gFade)"/>
<rect x="558" y="243.20" width="44.00" height="1.2" fill="url(#gFade)"/>
<line x1="587" y1="229" x2="597" y2="239" stroke="#d8d8d8" stroke-width="0.8" />
<ellipse cx="581.2" cy="233.2" rx="3.4" ry="10.6" fill="#a4a4a4" stroke="#333" stroke-width="0.9"/>
<path d="M578.3,223.5 Q581.5,233.2 578.3,243" fill="none" stroke="#fafafa" stroke-width="1.6"/>
<ellipse cx="646" cy="250" rx="21" ry="5" fill="url(#gShadowR)" opacity="1.40"/>
<rect x="622" y="227.00" width="48.00" height="1.2" fill="url(#gFade)"/>
<rect x="622" y="247.90" width="48.00" height="1.2" fill="url(#gFade)"/>
<line x1="652" y1="229" x2="666" y2="247" stroke="#d8d8d8" stroke-width="0.8" />
<ellipse cx="646.5" cy="238" rx="3.8" ry="10.8" fill="#a4a4a4" stroke="#222" stroke-width="1"/>
<line x1="646.5" y1="227.5" x2="646.5" y2="248.5" stroke="#777" stroke-width="0.6" />
<rect x="687" y="219" width="50" height="30" fill="#efefef" stroke="none" stroke-width="1" rx="0" />
<ellipse cx="711" cy="244" rx="23" ry="5" fill="url(#gShadowR)" opacity="1.40"/>
<rect x="689.7" y="225.5" width="19" height="14" fill="#fbfbfb" stroke="none" stroke-width="1" rx="0" />
<rect x="714" y="225.8" width="20.8" height="13.4" fill="url(#gTan)" stroke="none" stroke-width="1" rx="0" />
<rect x="687" y="224.75" width="50.00" height="1.5" fill="url(#gFade)"/>
<rect x="687" y="238.65" width="50.00" height="1.5" fill="url(#gFade)"/>
<ellipse cx="710.8" cy="232.5" rx="2.8" ry="6.8" fill="#888" stroke="#222" stroke-width="0.9"/>
<ellipse cx="714.4" cy="232.5" rx="2.6" ry="6.8" fill="#aaa" stroke="#222" stroke-width="0.9"/>
<rect x="930.5" y="96.5" width="14" height="186" fill="#d6d6d6" stroke="#a8a4a0" stroke-width="1" rx="3" />
<rect x="930.5" y="110.5" width="14" height="100.5" fill="url(#gThumb)" stroke="#5d7fb0" stroke-width="1" rx="0" />
<path d="M935,157.5 h5 M935,160.5 h5 M935,163.5 h5" stroke="#46608e" stroke-width="1"/>
<path d="M930.5,110.5 L930.5,99.5 Q930.5,96.5 933.5,96.5 L941.5,96.5 Q944.5,96.5 944.5,99.5 L944.5,110.5 Z" fill="url(#gArrowBtn)" stroke="#a8a4a0"/>
<path d="M934.5,105.5 L937.5,102.5 L940.5,105.5" fill="none" stroke="#000" stroke-width="1.4"/>
<path d="M930.5,268.5 L930.5,279.5 Q930.5,282.5 933.5,282.5 L941.5,282.5 Q944.5,282.5 944.5,279.5 L944.5,268.5 Z" fill="url(#gArrowBtn)" stroke="#a8a4a0"/>
<path d="M934.5,273.5 L937.5,276.5 L940.5,273.5" fill="none" stroke="#000" stroke-width="1.4"/>
<rect x="457" y="296" width="1" height="1" fill="#a8a4a0" stroke="none" stroke-width="1" rx="0" />
<rect x="457" y="299" width="1" height="1" fill="#a8a4a0" stroke="none" stroke-width="1" rx="0" />
<rect x="460" y="296" width="1" height="1" fill="#a8a4a0" stroke="none" stroke-width="1" rx="0" />
<rect x="460" y="299" width="1" height="1" fill="#a8a4a0" stroke="none" stroke-width="1" rx="0" />
<rect x="463" y="296" width="1" height="1" fill="#a8a4a0" stroke="none" stroke-width="1" rx="0" />
<rect x="463" y="299" width="1" height="1" fill="#a8a4a0" stroke="none" stroke-width="1" rx="0" />
<rect x="466" y="296" width="1" height="1" fill="#a8a4a0" stroke="none" stroke-width="1" rx="0" />
<rect x="466" y="299" width="1" height="1" fill="#a8a4a0" stroke="none" stroke-width="1" rx="0" />
<rect x="469" y="296" width="1" height="1" fill="#a8a4a0" stroke="none" stroke-width="1" rx="0" />
<rect x="469" y="299" width="1" height="1" fill="#a8a4a0" stroke="none" stroke-width="1" rx="0" />
<rect x="472" y="296" width="1" height="1" fill="#a8a4a0" stroke="none" stroke-width="1" rx="0" />
<rect x="472" y="299" width="1" height="1" fill="#a8a4a0" stroke="none" stroke-width="1" rx="0" />
<rect x="475" y="296" width="1" height="1" fill="#a8a4a0" stroke="none" stroke-width="1" rx="0" />
<rect x="475" y="299" width="1" height="1" fill="#a8a4a0" stroke="none" stroke-width="1" rx="0" />
<rect x="478" y="296" width="1" height="1" fill="#a8a4a0" stroke="none" stroke-width="1" rx="0" />
<rect x="478" y="299" width="1" height="1" fill="#a8a4a0" stroke="none" stroke-width="1" rx="0" />
<rect x="481" y="296" width="1" height="1" fill="#a8a4a0" stroke="none" stroke-width="1" rx="0" />
<rect x="481" y="299" width="1" height="1" fill="#a8a4a0" stroke="none" stroke-width="1" rx="0" />
<rect x="484" y="296" width="1" height="1" fill="#a8a4a0" stroke="none" stroke-width="1" rx="0" />
<rect x="484" y="299" width="1" height="1" fill="#a8a4a0" stroke="none" stroke-width="1" rx="0" />
<rect x="487" y="296" width="1" height="1" fill="#a8a4a0" stroke="none" stroke-width="1" rx="0" />
<rect x="487" y="299" width="1" height="1" fill="#a8a4a0" stroke="none" stroke-width="1" rx="0" />
<rect x="490" y="296" width="1" height="1" fill="#a8a4a0" stroke="none" stroke-width="1" rx="0" />
<rect x="490" y="299" width="1" height="1" fill="#a8a4a0" stroke="none" stroke-width="1" rx="0" />
<rect x="493" y="296" width="1" height="1" fill="#a8a4a0" stroke="none" stroke-width="1" rx="0" />
<rect x="493" y="299" width="1" height="1" fill="#a8a4a0" stroke="none" stroke-width="1" rx="0" />
<rect x="496" y="296" width="1" height="1" fill="#a8a4a0" stroke="none" stroke-width="1" rx="0" />
<rect x="496" y="299" width="1" height="1" fill="#a8a4a0" stroke="none" stroke-width="1" rx="0" />
<rect x="499" y="296" width="1" height="1" fill="#a8a4a0" stroke="none" stroke-width="1" rx="0" />
<rect x="499" y="299" width="1" height="1" fill="#a8a4a0" stroke="none" stroke-width="1" rx="0" />
<rect x="502" y="296" width="1" height="1" fill="#a8a4a0" stroke="none" stroke-width="1" rx="0" />
<rect x="502" y="299" width="1" height="1" fill="#a8a4a0" stroke="none" stroke-width="1" rx="0" />
<rect x="12.5" y="317.5" width="63" height="23" fill="url(#gBtnP)" stroke="#8e8a86" stroke-width="1" rx="3" />
<text x="17.40" y="333.00" font-size="12" font-weight="normal" fill="#000" letter-spacing="0.215" >Side view</text>
<rect x="82.5" y="317.5" width="65" height="23" fill="url(#gBtn)" stroke="#9e9894" stroke-width="1" rx="3" />
<rect x="83" y="318" width="1" height="1" fill="#ff00ff" stroke="none" stroke-width="1" rx="0" />
<text x="87.40" y="333.20" font-size="12" font-weight="normal" fill="#000" letter-spacing="0.072" >Back view</text>
<rect x="161.5" y="316.5" width="25" height="25" fill="url(#gBtn)" stroke="#9e9894" stroke-width="1" rx="3" />
<rect x="163" y="317" width="1" height="1" fill="#ff00ff" stroke="none" stroke-width="1" rx="0" />
<circle cx="171.5" cy="325.6" r="4.9" fill="#eef4fc" stroke="#6a6a6a" stroke-width="1"/>
<path d="M175.1,329.20000000000005 L180.7,335.0" stroke="#888" stroke-width="1.8"/>
<circle cx="169.6" cy="333.5" r="3.4" fill="#1d4cb4" stroke="#0e2e7a" stroke-width="0.6"/>
<path d="M167.5,333.5 h4.2" stroke="#fff" stroke-width="1.2"/>
<rect x="338.5" y="316.5" width="25" height="25" fill="url(#gBtn)" stroke="#9e9894" stroke-width="1" rx="3" />
<rect x="340" y="317" width="1" height="1" fill="#ff00ff" stroke="none" stroke-width="1" rx="0" />
<circle cx="348.5" cy="325.6" r="4.9" fill="#eef4fc" stroke="#6a6a6a" stroke-width="1"/>
<path d="M352.1,329.20000000000005 L357.7,335.0" stroke="#888" stroke-width="1.8"/>
<circle cx="346.6" cy="333.5" r="3.4" fill="#1d4cb4" stroke="#0e2e7a" stroke-width="0.6"/>
<path d="M344.5,333.5 h4.2 M346.6,331.40000000000003 v4.2" stroke="#fff" stroke-width="1.1"/>
<rect x="197.5" y="318.5" width="130" height="21" fill="#ffffff" stroke="#8f8884" stroke-width="1" rx="3" />
<path d="M305.5,319 L324.5,319 Q327,319 327,322 L327,336 Q327,339 324.5,339 L305.5,339 Z" fill="url(#gBtn)"/>
<line x1="305.5" y1="319" x2="305.5" y2="339" stroke="#b4b0ac" stroke-width="1" />
<path d="M313.6,326.6 L318,331 L322.4,326.6" fill="none" stroke="#000" stroke-width="1.9"/>
<text x="201.50" y="333.20" font-size="12" font-weight="normal" fill="#000" letter-spacing="0.018" >Fit (11%)</text>
<rect x="384.5" y="317.5" width="53" height="23" fill="url(#gBtnP)" stroke="#8e8a86" stroke-width="1" rx="3" />
<text x="389.70" y="333.40" font-size="12" font-weight="normal" fill="#000" letter-spacing="0.083" >Stage 1</text>
<text x="692.30" y="333.00" font-size="12" font-weight="normal" fill="#000" letter-spacing="0.312" >Motor configuration:</text>
<rect x="811.5" y="318.5" width="137" height="21" fill="#ffffff" stroke="#8f8884" stroke-width="1" rx="3" />
<path d="M926.5,319 L945.5,319 Q948,319 948,322 L948,336 Q948,339 945.5,339 L926.5,339 Z" fill="url(#gBtn)"/>
<line x1="926.5" y1="319" x2="926.5" y2="339" stroke="#b4b0ac" stroke-width="1" />
<path d="M934.5,326.6 L938.9,331 L943.3,326.6" fill="none" stroke="#000" stroke-width="1.9"/>
<text x="815.10" y="333.20" font-size="12" font-weight="normal" fill="#000" letter-spacing="-0.157" >[J115-P]</text>
<rect x="11.5" y="354.5" width="32" height="17" fill="#ececec" stroke="#dcdcdc" stroke-width="1" rx="0" />
<text x="21.80" y="366.70" font-size="11" font-weight="normal" fill="#000" letter-spacing="-0.160" >0°</text>
<rect x="25.5" y="388" width="1.6" height="265" fill="#000" stroke="none" stroke-width="1" rx="0" />
<path d="M17.5,388.5 L17.5,380 Q17.5,378.5 19,378.5 L36.5,378.5 L36.5,388.5 Z" fill="url(#gBtn)" stroke="none"/>
<line x1="17" y1="388.5" x2="37" y2="388.5" stroke="#000" stroke-width="1.2" />
<line x1="36.5" y1="378" x2="36.5" y2="389" stroke="#000" stroke-width="1.2" />
<rect x="48.5" y="354.5" width="901" height="306" fill="#efefef" stroke="#c8c4c0" stroke-width="1" rx="0" />
<rect x="48.5" y="354.5" width="20" height="20" fill="#efefef" stroke="#dad6d2" stroke-width="1" rx="0" />
<text x="50.90" y="367.60" font-size="8" font-weight="normal" fill="#000" letter-spacing="0.260" >cm</text>
<rect x="69" y="375" width="880" height="284.5" fill="#ffffff" stroke="none" stroke-width="1" rx="0" />
<line x1="69" y1="375.5" x2="949" y2="375.5" stroke="#a8a4a0" stroke-width="1" />
<line x1="69.5" y1="375" x2="69.5" y2="660" stroke="#a8a4a0" stroke-width="1" />
<line x1="948.5" y1="375" x2="948.5" y2="660" stroke="#a8a4a0" stroke-width="1" />
<line x1="69" y1="659.5" x2="949" y2="659.5" stroke="#a8a4a0" stroke-width="1" />
<path d="M70.5,372V375 M75.5,372V375 M79.5,365V375 M83.5,372V375 M87.5,372V375 M91.5,372V375 M95.5,372V375 M99.5,369V375 M103.5,372V375 M108.5,372V375 M112.5,372V375 M116.5,372V375 M119.5,365V375 M123.5,372V375 M127.5,372V375 M131.5,372V375 M135.5,372V375 M140.5,369V375 M144.5,372V375 M148.5,372V375 M152.5,372V375 M156.5,372V375 M160.5,365V375 M164.5,372V375 M168.5,372V375 M173.5,372V375 M177.5,372V375 M181.5,369V375 M185.5,372V375 M189.5,372V375 M193.5,372V375 M197.5,372V375 M201.5,365V375 M206.5,372V375 M210.5,372V375 M214.5,372V375 M218.5,372V375 M222.5,369V375 M226.5,372V375 M230.5,372V375 M234.5,372V375 M239.5,372V375 M243.5,365V375 M247.5,372V375 M251.5,372V375 M255.5,372V375 M259.5,372V375 M263.5,369V375 M267.5,372V375 M272.5,372V375 M276.5,372V375 M280.5,372V375 M284.5,365V375 M288.5,372V375 M292.5,372V375 M296.5,372V375 M300.5,372V375 M305.5,369V375 M309.5,372V375 M313.5,372V375 M317.5,372V375 M321.5,372V375 M325.5,365V375 M329.5,372V375 M333.5,372V375 M338.5,372V375 M342.5,372V375 M346.5,369V375 M350.5,372V375 M354.5,372V375 M358.5,372V375 M362.5,372V375 M366.5,365V375 M371.5,372V375 M375.5,372V375 M379.5,372V375 M383.5,372V375 M387.5,369V375 M391.5,372V375 M395.5,372V375 M399.5,372V375 M404.5,372V375 M408.5,365V375 M412.5,372V375 M416.5,372V375 M420.5,372V375 M424.5,372V375 M428.5,369V375 M432.5,372V375 M437.5,372V375 M441.5,372V375 M445.5,372V375 M449.5,365V375 M453.5,372V375 M457.5,372V375 M461.5,372V375 M465.5,372V375 M470.5,369V375 M474.5,372V375 M478.5,372V375 M482.5,372V375 M486.5,372V375 M490.5,365V375 M494.5,372V375 M498.5,372V375 M503.5,372V375 M507.5,372V375 M511.5,369V375 M515.5,372V375 M519.5,372V375 M523.5,372V375 M527.5,372V375 M531.5,365V375 M536.5,372V375 M540.5,372V375 M544.5,372V375 M548.5,372V375 M552.5,369V375 M556.5,372V375 M560.5,372V375 M564.5,372V375 M569.5,372V375 M573.5,365V375 M577.5,372V375 M581.5,372V375 M585.5,372V375 M589.5,372V375 M593.5,369V375 M597.5,372V375 M602.5,372V375 M606.5,372V375 M610.5,372V375 M614.5,365V375 M618.5,372V375 M622.5,372V375 M626.5,372V375 M630.5,372V375 M635.5,369V375 M639.5,372V375 M643.5,372V375 M647.5,372V375 M651.5,372V375 M655.5,365V375 M659.5,372V375 M663.5,372V375 M668.5,372V375 M672.5,372V375 M676.5,369V375 M680.5,372V375 M684.5,372V375 M688.5,372V375 M692.5,372V375 M696.5,365V375 M701.5,372V375 M705.5,372V375 M709.5,372V375 M713.5,372V375 M717.5,369V375 M721.5,372V375 M725.5,372V375 M729.5,372V375 M734.5,372V375 M738.5,365V375 M742.5,372V375 M746.5,372V375 M750.5,372V375 M754.5,372V375 M758.5,369V375 M762.5,372V375 M767.5,372V375 M771.5,372V375 M775.5,372V375 M779.5,365V375 M783.5,372V375 M787.5,372V375 M791.5,372V375 M795.5,372V375 M800.5,369V375 M804.5,372V375 M808.5,372V375 M812.5,372V375 M816.5,372V375 M820.5,365V375 M824.5,372V375 M828.5,372V375 M833.5,372V375 M837.5,372V375 M841.5,369V375 M845.5,372V375 M849.5,372V375 M853.5,372V375 M857.5,372V375 M861.5,365V375 M866.5,372V375 M870.5,372V375 M874.5,372V375 M878.5,372V375 M882.5,369V375 M886.5,372V375 M890.5,372V375 M894.5,372V375 M899.5,372V375 M903.5,365V375 M907.5,372V375 M911.5,372V375 M915.5,372V375 M919.5,372V375 M923.5,369V375 M927.5,372V375 M932.5,372V375 M936.5,372V375 M940.5,372V375 M944.5,365V375 M948.5,372V375" stroke="#000" stroke-width="1" fill="none"/>
<text x="79.70" y="364.00" font-size="9.7" font-weight="normal" fill="#000" letter-spacing="0.767" stroke="#000" stroke-width="0.15">-10</text>
<text x="119.80" y="364.00" font-size="9.7" font-weight="bold" fill="#000" letter-spacing="0.000" stroke="#000" stroke-width="0.15">0</text>
<text x="160.80" y="364.00" font-size="9.7" font-weight="normal" fill="#000" letter-spacing="-0.667" stroke="#000" stroke-width="0.15">10</text>
<text x="201.80" y="364.00" font-size="9.7" font-weight="normal" fill="#000" letter-spacing="-0.667" stroke="#000" stroke-width="0.15">20</text>
<text x="243.80" y="364.00" font-size="9.7" font-weight="normal" fill="#000" letter-spacing="-0.667" stroke="#000" stroke-width="0.15">30</text>
<text x="284.80" y="364.00" font-size="9.7" font-weight="normal" fill="#000" letter-spacing="-0.667" stroke="#000" stroke-width="0.15">40</text>
<text x="325.80" y="364.00" font-size="9.7" font-weight="normal" fill="#000" letter-spacing="-0.667" stroke="#000" stroke-width="0.15">50</text>
<text x="366.80" y="364.00" font-size="9.7" font-weight="normal" fill="#000" letter-spacing="-0.667" stroke="#000" stroke-width="0.15">60</text>
<text x="408.80" y="364.00" font-size="9.7" font-weight="normal" fill="#000" letter-spacing="-0.667" stroke="#000" stroke-width="0.15">70</text>
<text x="449.80" y="364.00" font-size="9.7" font-weight="normal" fill="#000" letter-spacing="-0.667" stroke="#000" stroke-width="0.15">80</text>
<text x="490.80" y="364.00" font-size="9.7" font-weight="normal" fill="#000" letter-spacing="-0.667" stroke="#000" stroke-width="0.15">90</text>
<text x="531.80" y="364.00" font-size="9.7" font-weight="bold" fill="#000" letter-spacing="-0.099" stroke="#000" stroke-width="0.15">100</text>
<text x="573.80" y="364.00" font-size="9.7" font-weight="normal" fill="#000" letter-spacing="0.488" stroke="#000" stroke-width="0.15">110</text>
<text x="614.80" y="364.00" font-size="9.7" font-weight="normal" fill="#000" letter-spacing="0.100" stroke="#000" stroke-width="0.15">120</text>
<text x="655.80" y="364.00" font-size="9.7" font-weight="normal" fill="#000" letter-spacing="0.100" stroke="#000" stroke-width="0.15">130</text>
<text x="696.80" y="364.00" font-size="9.7" font-weight="normal" fill="#000" letter-spacing="0.100" stroke="#000" stroke-width="0.15">140</text>
<text x="738.80" y="364.00" font-size="9.7" font-weight="normal" fill="#000" letter-spacing="0.100" stroke="#000" stroke-width="0.15">150</text>
<text x="779.80" y="364.00" font-size="9.7" font-weight="normal" fill="#000" letter-spacing="0.100" stroke="#000" stroke-width="0.15">160</text>
<text x="820.80" y="364.00" font-size="9.7" font-weight="normal" fill="#000" letter-spacing="0.100" stroke="#000" stroke-width="0.15">170</text>
<text x="861.80" y="364.00" font-size="9.7" font-weight="normal" fill="#000" letter-spacing="0.100" stroke="#000" stroke-width="0.15">180</text>
<text x="903.80" y="364.00" font-size="9.7" font-weight="normal" fill="#000" letter-spacing="0.100" stroke="#000" stroke-width="0.15">190</text>
<text x="944.00" y="364.00" font-size="9.7" font-weight="normal" fill="#000" letter-spacing="0.000" stroke="#000" stroke-width="0.15">2</text>
<path d="M66,376.5H69 M66,380.5H69 M66,384.5H69 M66,388.5H69 M59,392.5H69 M66,396.5H69 M66,401.5H69 M66,405.5H69 M66,409.5H69 M63,413.5H69 M66,417.5H69 M66,421.5H69 M66,425.5H69 M66,429.5H69 M59,434.5H69 M66,438.5H69 M66,442.5H69 M66,446.5H69 M66,450.5H69 M63,454.5H69 M66,458.5H69 M66,462.5H69 M66,467.5H69 M66,471.5H69 M59,475.5H69 M66,479.5H69 M66,483.5H69 M66,487.5H69 M66,491.5H69 M63,495.5H69 M66,500.5H69 M66,504.5H69 M66,508.5H69 M66,512.5H69 M59,516.5H69 M66,520.5H69 M66,524.5H69 M66,528.5H69 M66,532.5H69 M63,537.5H69 M66,541.5H69 M66,545.5H69 M66,549.5H69 M66,553.5H69 M59,557.5H69 M66,561.5H69 M66,565.5H69 M66,570.5H69 M66,574.5H69 M63,578.5H69 M66,582.5H69 M66,586.5H69 M66,590.5H69 M66,594.5H69 M59,598.5H69 M66,603.5H69 M66,607.5H69 M66,611.5H69 M66,615.5H69 M63,619.5H69 M66,623.5H69 M66,627.5H69 M66,631.5H69 M66,636.5H69 M59,640.5H69 M66,644.5H69 M66,648.5H69 M66,652.5H69 M66,656.5H69" stroke="#000" stroke-width="1" fill="none"/>
<text x="51.00" y="390.60" font-size="9.7" font-weight="normal" fill="#000" letter-spacing="0.367" stroke="#000" stroke-width="0.15">-30</text>
<text x="51.00" y="432.60" font-size="9.7" font-weight="normal" fill="#000" letter-spacing="0.367" stroke="#000" stroke-width="0.15">-20</text>
<text x="51.00" y="473.60" font-size="9.7" font-weight="normal" fill="#000" letter-spacing="0.367" stroke="#000" stroke-width="0.15">-10</text>
<text x="49.90" y="515.00" font-size="9.7" font-weight="bold" fill="#000" letter-spacing="0.000" >0</text>
<text x="50.90" y="555.70" font-size="9.7" font-weight="normal" fill="#000" letter-spacing="-0.267" stroke="#000" stroke-width="0.15">10</text>
<text x="50.90" y="596.70" font-size="9.7" font-weight="normal" fill="#000" letter-spacing="-0.267" stroke="#000" stroke-width="0.15">20</text>
<text x="50.90" y="638.70" font-size="9.7" font-weight="normal" fill="#000" letter-spacing="-0.267" stroke="#000" stroke-width="0.15">30</text>
<g fill="none" stroke-linejoin="miter">
<path d="M259.00,496.10 L255.54,496.11 L252.07,496.15 L248.61,496.21 L245.15,496.30 L241.69,496.42 L238.22,496.55 L234.76,496.72 L231.30,496.91 L227.84,497.12 L224.38,497.36 L220.91,497.63 L217.45,497.92 L213.99,498.23 L210.53,498.58 L207.06,498.94 L203.60,499.34 L200.14,499.75 L196.68,500.20 L193.21,500.67 L189.75,501.17 L186.29,501.69 L182.82,502.24 L179.36,502.81 L175.90,503.41 L172.44,504.04 L168.97,504.69 L165.51,505.37 L162.05,506.08 L158.59,506.81 L155.12,507.58 L151.66,508.36 L148.20,509.18 L144.74,510.02 L141.28,510.89 L137.81,511.79 L134.35,512.71 L130.89,513.67 L127.42,514.65 L123.96,515.66 L120.50,516.70 L123.96,517.74 L127.42,518.75 L130.89,519.73 L134.35,520.69 L137.81,521.61 L141.28,522.51 L144.74,523.38 L148.20,524.22 L151.66,525.04 L155.12,525.82 L158.59,526.59 L162.05,527.32 L165.51,528.03 L168.97,528.71 L172.44,529.36 L175.90,529.99 L179.36,530.59 L182.82,531.16 L186.29,531.71 L189.75,532.23 L193.21,532.73 L196.68,533.20 L200.14,533.65 L203.60,534.06 L207.06,534.46 L210.53,534.82 L213.99,535.17 L217.45,535.48 L220.91,535.77 L224.38,536.04 L227.84,536.28 L231.30,536.49 L234.76,536.68 L238.22,536.85 L241.69,536.98 L245.15,537.10 L248.61,537.19 L252.07,537.25 L255.54,537.29 L259.00,537.30" stroke="#0000ff" stroke-width="1.15"/>
<path d="M454,495.5 L897.5,495.5 M454,538.5 L897.5,538.5 M897.5,489.7 L897.5,539" stroke="#0000ff" stroke-width="1"/>
<path d="M259,496 L454,496 M259,538 L454,538 M260,495 L260,539 M417,495 L417,537" stroke="#0000ff" stroke-width="2"/>
<line x1="295.5" y1="496" x2="295.5" y2="538" stroke="#0000ff" stroke-width="1" />
<line x1="427.5" y1="496" x2="427.5" y2="538" stroke="#0000ff" stroke-width="1" />
<rect x="350.3" y="502.3" width="29.6" height="29.2" rx="8.5" stroke="#ff0000" stroke-width="1.1" stroke-dasharray="5.5,3.5"/>
<rect x="375.3" y="500.5" width="13.5" height="32.8" rx="4.5" stroke="#000" stroke-width="1.1" stroke-dasharray="5.5,3.5"/>
<rect x="391.5" y="496.5" width="62" height="41" stroke="#ab0055" stroke-width="1"/>
<rect x="393.5" y="498.5" width="57" height="37" stroke="#ab0055" stroke-width="1"/>
<rect x="394" y="500.5" width="56.5" height="33" rx="9" stroke="#000" stroke-width="1.1" stroke-dasharray="5.5,3.5"/>
<line x1="417" y1="495" x2="417" y2="537" stroke="#0000ff" stroke-width="2" />
<line x1="427.5" y1="495" x2="427.5" y2="538" stroke="#0000ff" stroke-width="1" />
<path d="M509.5,496 L509.5,538 M575.5,496 L575.5,538 M578.5,496 L578.5,538" stroke="#ab0055" stroke-width="1"/>
<path d="M509,497 L579,497 M509,537 L579,537" stroke="#ab0055" stroke-width="2"/>
<rect x="522" y="502" width="29.3" height="30" rx="8.5" stroke="#ff0000" stroke-width="1.1" stroke-dasharray="5.5,3.5"/>
<rect x="555.3" y="500.5" width="12.4" height="32.6" rx="4.5" stroke="#000" stroke-width="1.1" stroke-dasharray="5.5,3.5"/>
<rect x="576.5" y="493.5" width="3" height="2" stroke="#0000ff" stroke-width="1"/>
<circle cx="590.6" cy="516.8" r="6.6" fill="#fff" stroke="#0000ff" stroke-width="1"/>
<path d="M590.6,516.8 L590.6,510.2 A6.6,6.6 0 0 0 584,516.8 Z M590.6,516.8 L590.6,523.4 A6.6,6.6 0 0 0 597.2,516.8 Z" fill="#0000ff"/>
<rect x="608.5" y="505.5" width="40" height="23" stroke="#ab0055" stroke-width="1"/>
<rect x="648.5" y="505.5" width="253" height="23" fill="#9c9a9c" stroke="#1a0810" stroke-width="1"/>
<rect x="626.5" y="496.5" width="3" height="41" stroke="#ab0055" stroke-width="1"/>
<rect x="775.5" y="496.5" width="2" height="41" stroke="#ab0055" stroke-width="1"/>
<rect x="890.5" y="496.5" width="3" height="41" stroke="#ab0055" stroke-width="1"/>
<line x1="897" y1="496" x2="897" y2="539" stroke="#ab0055" stroke-width="2" />
<path d="M779.8,495.5 L854.4,450.5 L876.6,450.5 L897.5,489.7" stroke="#0000ff" stroke-width="1.15"/>
<path d="M783.2,528.7 L853.7,550.6 L876.5,550.6 L895.9,531.2" stroke="#0000ff" stroke-width="1.15"/>
<line x1="779.2" y1="527.5" x2="896.2" y2="527.5" stroke="#00007a" stroke-width="1.2" />
<rect x="882.5" y="493.5" width="2" height="2" stroke="#0000ff" stroke-width="1"/>
<circle cx="686.3" cy="516.7" r="6.9" fill="none" stroke="#ff2020" stroke-width="1.1"/>
<circle cx="686.3" cy="516.7" r="4.9" fill="#ff0000"/>
</g>
<text x="78.40" y="389.00" font-size="11" font-weight="normal" fill="#000" letter-spacing="0.327" >Haisunäätä</text>
<text x="78.40" y="401.80" font-size="11" font-weight="normal" fill="#000" letter-spacing="0.427" >Length 189 cm, max. diameter 10.2 cm</text>
<text x="78.40" y="414.00" font-size="11" font-weight="normal" fill="#000" letter-spacing="0.526" >Mass with motors 3832 g</text>
<text x="852.60" y="389.00" font-size="11" font-weight="normal" fill="#000" letter-spacing="0.313" >Stability: 2.28 cal</text>
<text x="878.50" y="401.50" font-size="11" font-weight="normal" fill="#000" letter-spacing="0.427" >CG: 114 cm</text>
<text x="880.70" y="414.00" font-size="11" font-weight="normal" fill="#000" letter-spacing="0.231" >CP: 137 cm</text>
<text x="879.50" y="426.80" font-size="8.5" font-weight="normal" fill="#808080" letter-spacing="0.963" >at M=0.30</text>
<circle cx="868.3" cy="397.7" r="4.3" fill="#fff" stroke="#0000ff" stroke-width="0.9"/>
<path d="M868.3,397.7 L868.3,393.4 A4.3,4.3 0 0 0 864,397.7 Z M868.3,397.7 L868.3,402 A4.3,4.3 0 0 0 872.6,397.7 Z" fill="#0000ff"/>
<circle cx="868.3" cy="410.3" r="4.4" fill="#ff0000"/>
<text x="78.40" y="625.00" font-size="11" font-weight="normal" fill="#14148c" letter-spacing="0.328" >Apogee:</text>
<text x="178.40" y="625.00" font-size="11" font-weight="normal" fill="#14148c" letter-spacing="0.255" >814 m</text>
<text x="78.40" y="638.00" font-size="11" font-weight="normal" fill="#14148c" letter-spacing="0.357" >Max. velocity:</text>
<text x="178.40" y="638.00" font-size="11" font-weight="normal" fill="#14148c" letter-spacing="0.508" >107 m/s  (Mach 0.32)</text>
<text x="78.40" y="650.80" font-size="11" font-weight="normal" fill="#14148c" letter-spacing="0.335" >Max. acceleration:</text>
<text x="178.40" y="650.80" font-size="11" font-weight="normal" fill="#14148c" letter-spacing="0.816" >49.8 m/s²</text>
<text x="73.75" y="673.80" font-size="9" font-weight="normal" fill="#111" letter-spacing="0.501" stroke="#111" stroke-width="0.2">Click to select</text>
<text x="148.60" y="673.80" font-size="9" font-weight="normal" fill="#111" letter-spacing="0.600" stroke="#111" stroke-width="0.2">Shift+click to select other</text>
<text x="276.20" y="673.80" font-size="9" font-weight="normal" fill="#111" letter-spacing="0.776" stroke="#111" stroke-width="0.2">Double-click to edit</text>
<text x="378.80" y="673.80" font-size="9" font-weight="normal" fill="#111" letter-spacing="0.664" stroke="#111" stroke-width="0.2">Click+drag to move</text>
</svg></body></html>
